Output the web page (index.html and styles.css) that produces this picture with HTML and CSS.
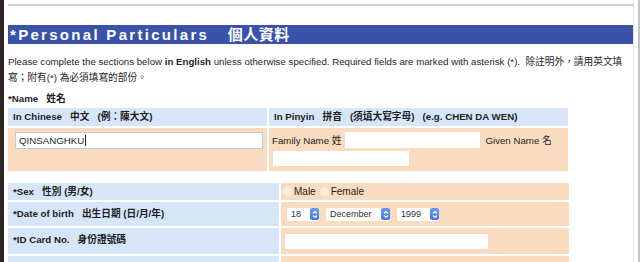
FILE: index.html
```html
<!DOCTYPE html>
<html lang="zh-Hant">
<head>
  <meta charset="UTF-8">
  <title>Personal Particulars</title>
  <link rel="stylesheet" href="styles.css">
</head>
<body>
  <div class="edge"></div>
  <div class="page">
    <div class="rule"></div>
    <h1 class="section-bar">*Personal Particulars <span class="zh">個人資料</span></h1>

    <p class="intro">Please complete the sections below <b>in English</b> unless otherwise specified. Required fields are marked with asterisk (*).&nbsp; 除註明外，請用英文填寫；附有(*) 為必須填寫的部份。</p>

    <div class="field-title">*Name&nbsp;&nbsp; 姓名</div>
    <div class="name-grid">
      <div class="cell head">In Chinese&nbsp;&nbsp; 中文&nbsp;&nbsp; (例：陳大文)</div>
      <div class="cell head">In Pinyin&nbsp;&nbsp; 拼音&nbsp;&nbsp; (須填大寫字母)&nbsp;&nbsp; (e.g. CHEN DA WEN)</div>
      <div class="cell body">
        <div class="text-input focused">QINSANGHKU<span class="caret"></span></div>
      </div>
      <div class="cell body pinyin">
        <div class="pinyin-line">
          <span>Family Name 姓</span>
          <div class="text-input family"></div>
          <span class="given">Given Name 名</span>
        </div>
        <div class="text-input given-box"></div>
      </div>
    </div>

    <div class="detail-grid">
      <div class="cell label">*Sex&nbsp;&nbsp; 性別 (男/女)</div>
      <div class="cell value radios">
        <span class="radio"></span><span>Male</span>
        <span class="radio"></span><span>Female</span>
      </div>

      <div class="cell label dob">*Date of birth&nbsp;&nbsp; 出生日期 (日/月/年)</div>
      <div class="cell value selects">
        <span class="select w-day">18<span class="arrows"><svg width="6" height="9" viewBox="0 0 6 9"><path d="M1 3.5 L3 1.5 L5 3.5 M1 5.5 L3 7.5 L5 5.5" fill="none" stroke="#fff" stroke-width="1.2"/></svg></span></span>
        <span class="select w-month">December<span class="arrows"><svg width="6" height="9" viewBox="0 0 6 9"><path d="M1 3.5 L3 1.5 L5 3.5 M1 5.5 L3 7.5 L5 5.5" fill="none" stroke="#fff" stroke-width="1.2"/></svg></span></span>
        <span class="select w-year">1999<span class="arrows"><svg width="6" height="9" viewBox="0 0 6 9"><path d="M1 3.5 L3 1.5 L5 3.5 M1 5.5 L3 7.5 L5 5.5" fill="none" stroke="#fff" stroke-width="1.2"/></svg></span></span>
      </div>

      <div class="cell label id">*ID Card No.&nbsp;&nbsp; 身份證號碼</div>
      <div class="cell value id-value">
        <div class="text-input id-box"></div>
      </div>

      <div class="cell label faint">*Address&nbsp;&nbsp; 地址</div>
      <div class="cell value"></div>
    </div>
  </div>
  <div class="gutter"></div>
</body>
</html>
```

FILE: styles.css
```css
body {
  margin: 0;
  display: flex;
  height: 262px;
  overflow: hidden;
  background: #fff;
  font-family: 'Liberation Sans', Arial, 'Noto Sans CJK TC', sans-serif;
  font-size: 9.7px;
  color: #1e1e1e;
}
.edge {
  width: 4px;
  background: #2e2421;
}
.page {
  width: 625px;
  padding-left: 4px;
}
.gutter {
  flex: 1;
  border-left: 1px solid #e2e2e2;
  border-right: 2px solid #c4c4c4;
}
.rule {
  margin-top: 4px;
  height: 2px;
  background: #cfcfcf;
}
.section-bar {
  margin: 19px 0 0;
  height: 19px;
  line-height: 19px;
  padding-left: 2px;
  background: #3a52a8;
  color: #fff;
  font-family: 'Liberation Sans', Arial, 'Noto Sans CJK TC', sans-serif;
  font-size: 15px;
  font-weight: bold;
  letter-spacing: 2.3px;
}
.section-bar .zh {
  margin-left: 12px;
  letter-spacing: 0.5px;
}
.intro {
  margin: 10px 0 0;
  line-height: 16px;
  width: 620px;
}
.field-title {
  margin-top: 6px;
  font-weight: bold;
  line-height: 14px;
}
.name-grid {
  margin-top: 2px;
  display: grid;
  grid-template-columns: 259px 299px;
  grid-template-rows: 18px 43px;
  gap: 2px;
}
.cell {
  padding-left: 5px;
}
.head {
  background: #d6e5f7;
  font-weight: bold;
  line-height: 18px;
}
.body {
  background: #f9dbbf;
  padding-top: 4px;
  padding-left: 7px;
}
.text-input {
  background: #fff;
  height: 16px;
  box-sizing: border-box;
}
.focused {
  width: 248px;
  height: 17px;
  border: 1px solid #c9c9c9;
  padding-left: 3px;
  line-height: 15px;
}
.caret {
  display: inline-block;
  width: 1px;
  height: 11px;
  background: #222;
  vertical-align: -2px;
  margin-left: 1px;
}
.pinyin {
  padding-left: 3px;
}
.pinyin-line {
  display: flex;
  align-items: center;
  height: 16px;
}
.family {
  width: 135px;
  margin-left: 4px;
}
.given {
  margin-left: 5px;
}
.given-box {
  width: 136px;
  height: 15px;
  margin-top: 3px;
  margin-left: 1px;
}
.detail-grid {
  margin-top: 12px;
  display: grid;
  grid-template-columns: 271px 288px;
  grid-template-rows: 17px 24px 26px 20px;
  gap: 2px;
}
.label {
  background: #d6e5f7;
  font-weight: bold;
  padding-left: 5px;
  line-height: 17px;
}
.label.dob {
  line-height: 24px;
}
.label.id {
  padding-top: 3px;
}
.label.faint {
  color: #9aa3b0;
  padding-top: 3px;
}
.value {
  background: #f9dbbf;
}
.radios {
  display: flex;
  align-items: center;
  padding-left: 2px;
  font-size: 10px;
}
.radio {
  width: 9px;
  height: 9px;
  border-radius: 50%;
  background: #fbece0;
  margin-right: 2px;
}
.radio + span {
  margin-right: 4px;
}
.selects {
  display: flex;
  align-items: center;
  gap: 7px;
  padding-left: 6px;
}
.select {
  display: inline-flex;
  align-items: center;
  justify-content: space-between;
  height: 13px;
  background: #fff;
  border-radius: 2px;
  padding-left: 4px;
  font-size: 9px;
  color: #333;
  box-sizing: border-box;
}
.w-day { width: 32px; }
.w-month { width: 64px; }
.w-year { width: 42px; }
.arrows {
  display: inline-flex;
  align-items: center;
  justify-content: center;
  width: 9px;
  height: 12px;
  border-radius: 2px;
  background: linear-gradient(#6c9cf0, #3f74dc);
}
.id-value {
  padding-top: 6px;
  padding-left: 4px;
}
.id-box {
  width: 203px;
  height: 15px;
}
```
